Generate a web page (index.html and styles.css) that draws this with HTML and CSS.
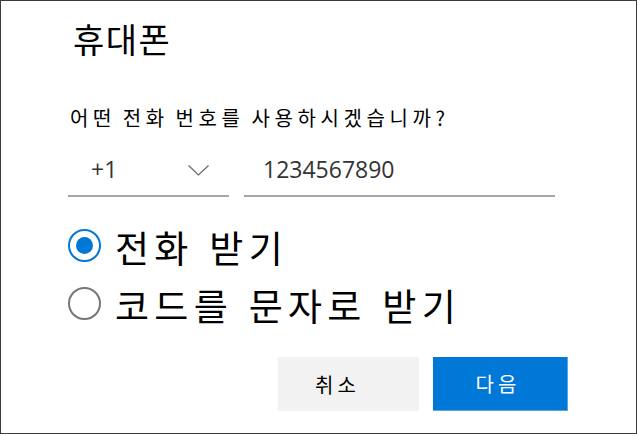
FILE: index.html
```html
<!DOCTYPE html>
<html lang="ko">
<head>
<meta charset="utf-8">
<link rel="stylesheet" href="styles.css">
</head>
<body>
<div class="dialog">
  <h1 class="title">휴대폰</h1>
  <p class="question">어떤 전화 번호를 사용하시겠습니까?</p>
  <div class="phone-row">
    <div class="country">
      <span class="country-code">+1</span>
      <svg class="chevron" width="21" height="11" viewBox="0 0 21 11"><path d="M0.5 0.5 L10.5 10 L20.5 0.5" fill="none" stroke="#666" stroke-width="1.2"/></svg>
    </div>
    <div class="number">1234567890</div>
  </div>
  <div class="options">
    <label class="option">
      <span class="radio checked"></span>
      <span class="option-text">전화 받기</span>
    </label>
    <label class="option">
      <span class="radio"></span>
      <span class="option-text">코드를 문자로 받기</span>
    </label>
  </div>
  <div class="actions">
    <button class="btn btn-cancel">취소</button>
    <button class="btn btn-next">다음</button>
  </div>
</div>
</body>
</html>
```

FILE: styles.css
```css
html, body {
  margin: 0;
  padding: 0;
  background: #fff;
}
.dialog {
  box-sizing: border-box;
  width: 637px;
  height: 434px;
  border: 1px solid #3c3c3c;
  padding: 0 68px 0 67px;
  display: flex;
  flex-direction: column;
  font-family: "Noto Sans CJK KR", "Noto Sans", sans-serif;
  color: #000;
}
.title {
  margin: 14px 0 0 5px;
  font-size: 34px;
  font-weight: 400;
  line-height: 48px;
  letter-spacing: 1.5px;
}
.question {
  margin: 43px 0 0 2px;
  font-size: 20px;
  line-height: 24px;
  letter-spacing: 4.6px;
  word-spacing: -3.4px;
}
.phone-row {
  margin-top: 17px;
  display: flex;
  gap: 15px;
}
.country {
  width: 161px;
  height: 50px;
  box-sizing: border-box;
  border-bottom: 2px solid #a6a6a6;
  display: flex;
  align-items: flex-start;
  justify-content: space-between;
  padding: 7px 20px 0 23px;
}
.country-code, .number {
  font-family: "Open Sans", "Noto Sans", sans-serif;
  font-size: 23px;
  line-height: 30px;
  color: #333;
}
.chevron {
  margin-top: 11px;
}
.number {
  width: 311px;
  height: 50px;
  box-sizing: border-box;
  border-bottom: 2px solid #a6a6a6;
  padding: 7px 0 0 19px;
}
.options {
  margin-top: 24px;
  display: flex;
  flex-direction: column;
  gap: 10px;
}
.option {
  display: flex;
  align-items: center;
  height: 48px;
}
.radio {
  box-sizing: border-box;
  width: 33px;
  height: 33px;
  border: 2px solid #767676;
  border-radius: 50%;
  margin-right: 14px;
  display: flex;
  align-items: center;
  justify-content: center;
  flex: none;
}
.radio.checked {
  border-color: #0078d7;
}
.radio.checked::after {
  content: "";
  width: 17px;
  height: 17px;
  border-radius: 50%;
  background: #0078d7;
}
.option-text {
  font-size: 37px;
  line-height: 48px;
  letter-spacing: 5.3px;
  word-spacing: 0;
  margin-top: 3px;
}
.actions {
  margin-top: auto;
  margin-bottom: 22px;
  display: flex;
  justify-content: flex-end;
  gap: 14px;
}
.btn {
  height: 54px;
  border: none;
  font-family: "Noto Sans CJK KR", "Noto Sans", sans-serif;
  font-size: 20px;
  letter-spacing: 4px;
  padding: 0;
}
.btn-cancel {
  width: 141px;
  background: #f2f2f2;
  color: #000;
  padding-right: 22px;
}
.btn-next {
  width: 135px;
  background: #0078d7;
  color: #fff;
  padding-right: 4px;
  border-right: 1px solid #5aa5e3;
  border-bottom: 1px solid #5aa5e3;
}
```
